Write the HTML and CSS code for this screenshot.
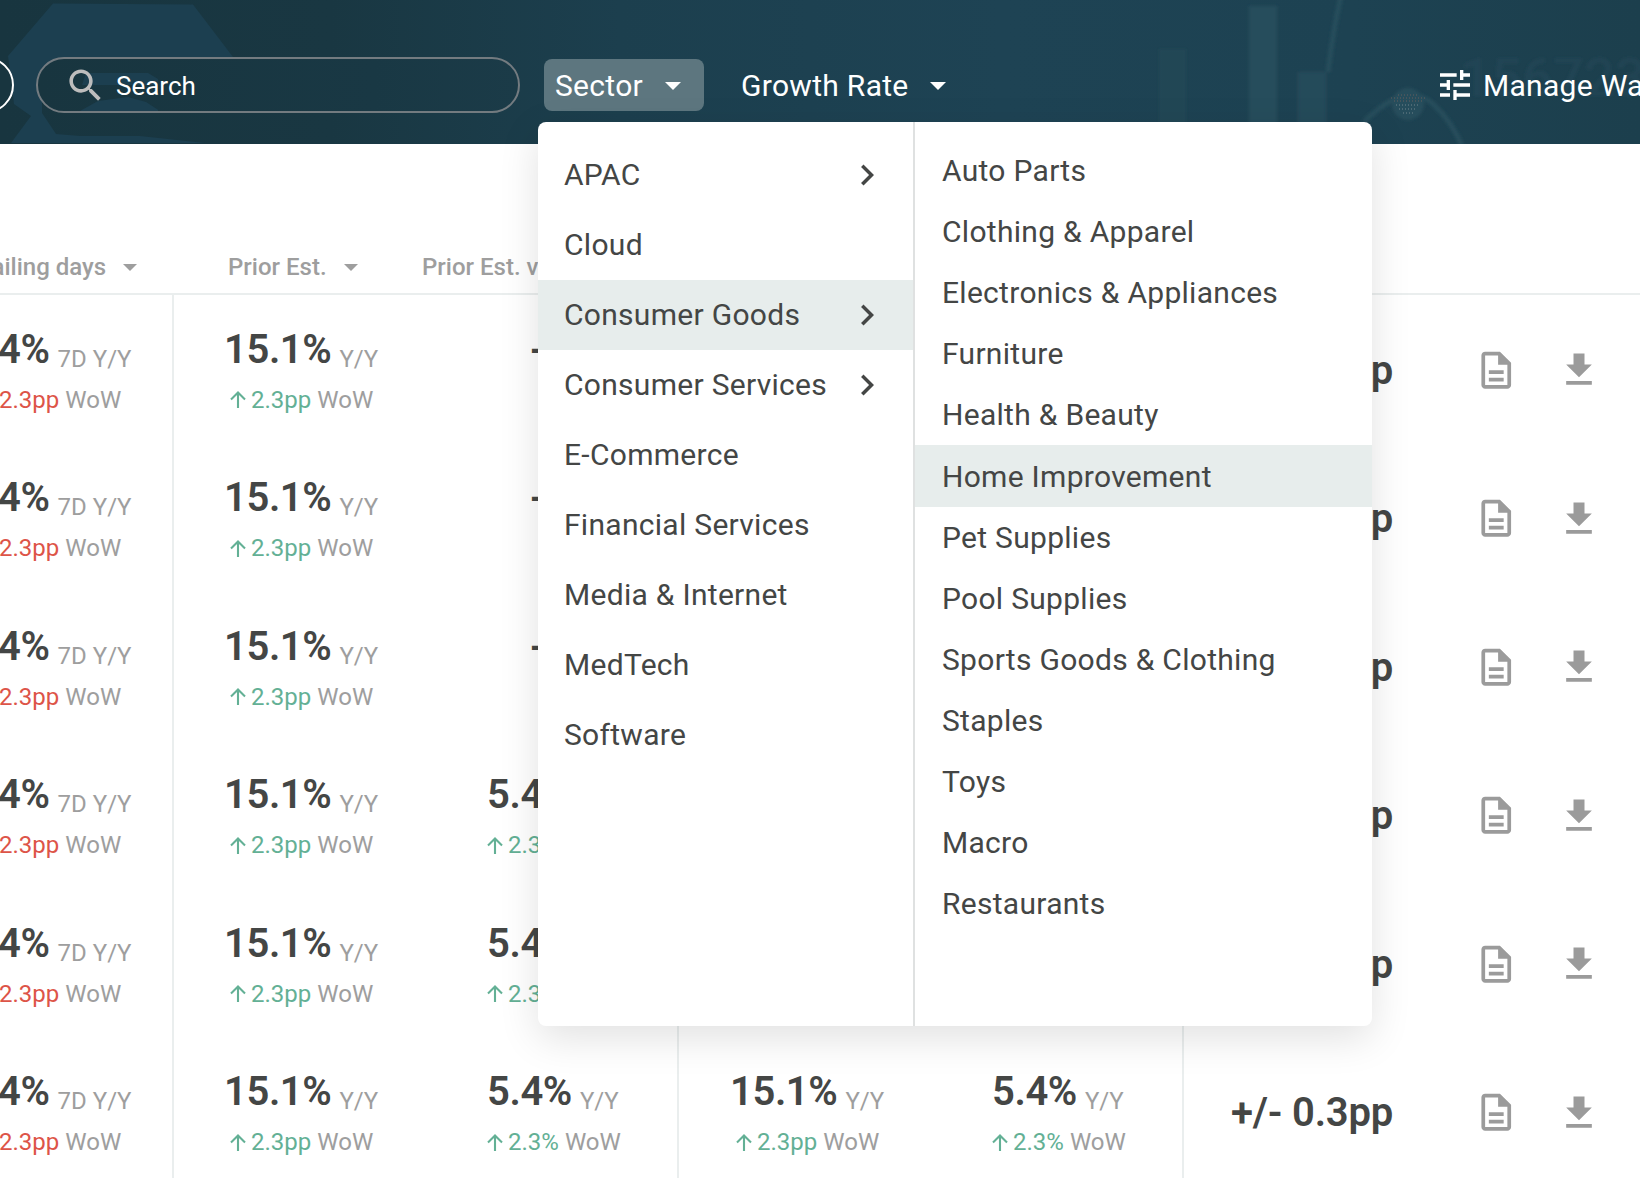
FILE: index.html
```html
<!DOCTYPE html>
<html lang="en">
<head>
<meta charset="utf-8">
<title>Watchlist</title>
<link rel="stylesheet" href="styles.css">
</head>
<body>

<svg class="defs" width="0" height="0">
  <symbol id="caret" viewBox="0 0 16 8"><path d="M0 0h16L8 8z"/></symbol>
  <symbol id="chevron" viewBox="0 0 24 24"><path d="M10 6L8.59 7.41 13.17 12l-4.58 4.59L10 18l6-6z"/></symbol>
  <symbol id="up" viewBox="0 0 16 17"><path d="M8 17V2M1 8.6l7-7 7 7" fill="none" stroke="currentColor" stroke-width="2.1"/></symbol>
  <symbol id="doc" viewBox="0 0 24 24"><path d="M8 16h8v2H8zm0-4h8v2H8zm6-10H6c-1.1 0-2 .9-2 2v16c0 1.1.89 2 1.99 2H18c1.1 0 2-.9 2-2V8l-6-6zm4 18H6V4h7v5h5v11z"/></symbol>
  <symbol id="download" viewBox="0 0 24 24"><path d="M19 9h-4V3H9v6H5l7 7 7-7zM5 18v2h14v-2H5z"/></symbol>
</svg>

<header class="header">
  <svg class="header-art" width="1640" height="144" viewBox="0 0 1640 144">
    <defs><filter id="soft"><feGaussianBlur stdDeviation="1.5"/></filter></defs>
    <path class="hex" d="M53 3.500L193 4.500 233 57V90H42L42 113 56 134 80 136H140L205 143H11L31 116 14 104 8 56z"/>
    <g class="chart" filter="url(#soft)">
      <path d="M1159 49h27v95h-27z" opacity=".35"/>
      <path d="M1249 6h28v138h-28z"/>
      <path d="M1298 72h28v72h-28z" opacity=".8"/>
      <path d="M1328 72Q1333 30 1341-4" class="line"/>
      <path d="M1364 122Q1408 78 1435 106 1452 122 1462 146" class="line"/>
      <circle cx="1408" cy="104" r="16"/>
      <text x="1460" y="96">15672390</text>
    </g>
    <g class="dots">
      <path d="M1394 101h28M1391 98h34M1398 95h21"/>
      <path d="M1396 105h24M1399 109h18M1403 113h10" class="pale"/>
    </g>
  </svg>
  <div class="toolbar">
    <div class="round"></div>
    <div class="search">
      <svg class="patch" width="120" height="52" viewBox="0 0 120 52"><path d="M48 14H110L120 20V26H44zM42 52L60 42 90 38 108 43 122 52z"/></svg>
      <svg width="43" height="43" viewBox="0 0 24 24"><path d="M15.500 14h-.79l-.28-.27C15.410 12.590 16 11.110 16 9.500 16 5.910 13.090 3 9.500 3S3 5.910 3 9.500 5.910 16 9.500 16c1.610 0 3.090-.59 4.230-1.570l.27.28v.79l5 4.990L20.490 19l-4.990-5zm-6 0C7.010 14 5 11.990 5 9.500S7.010 5 9.500 5 14 7.010 14 9.500 11.990 14 9.500 14z"/></svg>
      <span>Search</span>
    </div>
    <div class="filter active"><span>Sector</span><svg class="caret"><use href="#caret"/></svg></div>
    <div class="filter"><span>Growth Rate</span><svg class="caret"><use href="#caret"/></svg></div>
  </div>
  <div class="manage">
    <svg width="40" height="40" viewBox="0 0 24 24"><path d="M3 17v2h6v-2H3zM3 5v2h10V5H3zm10 16v-2h8v-2h-8v-2h-2v6h2zM7 9v2H3v2h4v2h2V9H7zm14 4v-2H11v2h10zm-6-4h2V7h4V5h-4V3h-2v6z"/></svg>
    <span>Manage Watchlist</span>
  </div>
</header>

<main class="table">
  <div class="thead">
    <div class="th first"><span>ailing days</span><svg class="caret"><use href="#caret"/></svg></div>
    <div class="th">Prior Est.<svg class="caret"><use href="#caret"/></svg></div>
    <div class="th vs">Prior Est. vs</div>
  </div>

  <div class="row">
    <div class="cell first"><p class="value"><b>4%</b> <i>7D Y/Y</i></p><p class="delta down">2.3pp <i>WoW</i></p></div>
    <div class="cell"><p class="value"><b>15.1%</b> <i>Y/Y</i></p><p class="delta indent"><svg class="up"><use href="#up"/></svg>2.3pp <i>WoW</i></p></div>
    <div class="cell second end"><p class="value none"><b>-</b></p></div>
    <div class="cell"></div>
    <div class="cell second end"></div>
    <div class="cell error">+/- 0.3pp</div>
    <div class="cell actions"><svg class="doc"><use href="#doc"/></svg><svg class="dl"><use href="#download"/></svg></div>
  </div>

  <div class="row">
    <div class="cell first"><p class="value"><b>4%</b> <i>7D Y/Y</i></p><p class="delta down">2.3pp <i>WoW</i></p></div>
    <div class="cell"><p class="value"><b>15.1%</b> <i>Y/Y</i></p><p class="delta indent"><svg class="up"><use href="#up"/></svg>2.3pp <i>WoW</i></p></div>
    <div class="cell second end"><p class="value none"><b>-</b></p></div>
    <div class="cell"></div>
    <div class="cell second end"></div>
    <div class="cell error">+/- 0.3pp</div>
    <div class="cell actions"><svg class="doc"><use href="#doc"/></svg><svg class="dl"><use href="#download"/></svg></div>
  </div>

  <div class="row">
    <div class="cell first"><p class="value"><b>4%</b> <i>7D Y/Y</i></p><p class="delta down">2.3pp <i>WoW</i></p></div>
    <div class="cell"><p class="value"><b>15.1%</b> <i>Y/Y</i></p><p class="delta indent"><svg class="up"><use href="#up"/></svg>2.3pp <i>WoW</i></p></div>
    <div class="cell second end"><p class="value none"><b>-</b></p></div>
    <div class="cell"></div>
    <div class="cell second end"></div>
    <div class="cell error">+/- 0.3pp</div>
    <div class="cell actions"><svg class="doc"><use href="#doc"/></svg><svg class="dl"><use href="#download"/></svg></div>
  </div>

  <div class="row">
    <div class="cell first"><p class="value"><b>4%</b> <i>7D Y/Y</i></p><p class="delta down">2.3pp <i>WoW</i></p></div>
    <div class="cell"><p class="value"><b>15.1%</b> <i>Y/Y</i></p><p class="delta indent"><svg class="up"><use href="#up"/></svg>2.3pp <i>WoW</i></p></div>
    <div class="cell second end"><p class="value"><b>5.4%</b></p><p class="delta"><svg class="up"><use href="#up"/></svg>2.3%</p></div>
    <div class="cell"></div>
    <div class="cell second end"></div>
    <div class="cell error">+/- 0.3pp</div>
    <div class="cell actions"><svg class="doc"><use href="#doc"/></svg><svg class="dl"><use href="#download"/></svg></div>
  </div>

  <div class="row">
    <div class="cell first"><p class="value"><b>4%</b> <i>7D Y/Y</i></p><p class="delta down">2.3pp <i>WoW</i></p></div>
    <div class="cell"><p class="value"><b>15.1%</b> <i>Y/Y</i></p><p class="delta indent"><svg class="up"><use href="#up"/></svg>2.3pp <i>WoW</i></p></div>
    <div class="cell second end"><p class="value"><b>5.4%</b></p><p class="delta"><svg class="up"><use href="#up"/></svg>2.3%</p></div>
    <div class="cell"></div>
    <div class="cell second end"></div>
    <div class="cell error">+/- 0.3pp</div>
    <div class="cell actions"><svg class="doc"><use href="#doc"/></svg><svg class="dl"><use href="#download"/></svg></div>
  </div>

  <div class="row">
    <div class="cell first"><p class="value"><b>4%</b> <i>7D Y/Y</i></p><p class="delta down">2.3pp <i>WoW</i></p></div>
    <div class="cell"><p class="value"><b>15.1%</b> <i>Y/Y</i></p><p class="delta indent"><svg class="up"><use href="#up"/></svg>2.3pp <i>WoW</i></p></div>
    <div class="cell second end"><p class="value"><b>5.4%</b> <i>Y/Y</i></p><p class="delta"><svg class="up"><use href="#up"/></svg>2.3% <i>WoW</i></p></div>
    <div class="cell"><p class="value"><b>15.1%</b> <i>Y/Y</i></p><p class="delta indent"><svg class="up"><use href="#up"/></svg>2.3pp <i>WoW</i></p></div>
    <div class="cell second end"><p class="value"><b>5.4%</b> <i>Y/Y</i></p><p class="delta"><svg class="up"><use href="#up"/></svg>2.3% <i>WoW</i></p></div>
    <div class="cell error">+/- 0.3pp</div>
    <div class="cell actions"><svg class="doc"><use href="#doc"/></svg><svg class="dl"><use href="#download"/></svg></div>
  </div>
</main>

<!-- sector dropdown -->
<div class="menu">
  <ul class="sectors">
    <li>APAC<svg><use href="#chevron"/></svg></li>
    <li>Cloud</li>
    <li class="selected">Consumer Goods<svg><use href="#chevron"/></svg></li>
    <li>Consumer Services<svg><use href="#chevron"/></svg></li>
    <li>E-Commerce</li>
    <li>Financial Services</li>
    <li>Media &amp; Internet</li>
    <li>MedTech</li>
    <li>Software</li>
  </ul>
  <ul class="industries">
    <li>Auto Parts</li>
    <li>Clothing &amp; Apparel</li>
    <li>Electronics &amp; Appliances</li>
    <li>Furniture</li>
    <li>Health &amp; Beauty</li>
    <li class="selected">Home Improvement</li>
    <li>Pet Supplies</li>
    <li>Pool Supplies</li>
    <li>Sports Goods &amp; Clothing</li>
    <li>Staples</li>
    <li>Toys</li>
    <li>Macro</li>
    <li>Restaurants</li>
  </ul>
</div>

</body>
</html>
```
FILE: styles.css
```css
* {
  box-sizing: border-box;
}

body {
  margin: 0;
  width: 1640px;
  height: 1178px;
  overflow: hidden;
  position: relative;
  background: #fff;
  color: #444645;
  font-family: Roboto, sans-serif;
}

p, ul {
  margin: 0;
  padding: 0;
}

i {
  font-style: normal;
}

svg {
  display: block;
  flex: none;
  fill: currentColor;
}

.defs {
  position: absolute;
}

/* header */
.header {
  position: relative;
  height: 144px;
  padding-top: 57px;
  display: flex;
  overflow: hidden;
  color: #fff;
  font-size: 30px;
  letter-spacing: 0.3px;
  white-space: nowrap;
  background: linear-gradient(90deg, #18353f 0, #193742 330px, #1c3f4e 620px, #1e4354 1000px, #1d4252 1350px, #1c3f4d 1640px);
}

.header-art {
  position: absolute;
  left: 0;
  top: 0;
}

.hex {
  fill: #1c3f50;
}

.chart {
  fill: #264d5c;
}

.chart .line {
  fill: none;
  stroke: #264d5c;
  stroke-width: 5;
}

.chart text {
  font-size: 54px;
  font-weight: 500;
  opacity: 0.4;
}

.dots path {
  stroke: #665f5c;
  stroke-width: 1;
  stroke-dasharray: 1 2;
}

.dots .pale {
  stroke: #71858c;
}

.toolbar {
  position: relative;
  flex: 0 0 1435px;
  height: 56px;
  display: flex;
  align-items: center;
}

.round {
  width: 56px;
  height: 56px;
  margin: 0 22px 0 -42px;
  border: 2px solid #fff;
  border-radius: 50%;
  background: #18353f;
}

.search {
  position: relative;
  width: 484px;
  height: 56px;
  margin-right: 24px;
  padding-left: 26px;
  display: flex;
  align-items: center;
  border: 2px solid #737b80;
  border-radius: 28px;
  background: linear-gradient(90deg, #18353f, #193844 70%, #1b3b48);
  font-size: 26px;
  letter-spacing: 0;
}

.search svg {
  color: #bdbdbd;
  margin-right: 9px;
}

.search .patch {
  position: absolute;
  left: 0;
  top: 0;
  color: #1c3f50;
}

.search svg + svg,
.search span {
  position: relative;
}

.search span {
  padding-top: 2px;
}

.filter {
  height: 52px;
  padding: 0 21px 0 11px;
  margin-right: 26px;
  display: flex;
  align-items: center;
  border-radius: 8px;
}

.filter.active {
  width: 160px;
  background: #5d767f;
}

.caret {
  width: 16px;
  height: 8px;
}

.filter .caret {
  margin: 1px 0 0 21px;
}

.filter.active .caret {
  margin-left: 22px;
}

.manage {
  position: relative;
  height: 56px;
  display: flex;
  align-items: center;
  gap: 8px;
}

/* table */
.thead {
  height: 150.5px;
  padding-bottom: 12px;
  display: flex;
  align-items: flex-end;
  border-bottom: 2px solid #eaeeee;
  color: #9e9e9e;
  font-size: 24px;
  font-weight: 500;
  line-height: 28px;
}

.th {
  width: 194px;
  display: flex;
  align-items: center;
  white-space: nowrap;
}

.th.first {
  width: 228px;
}

.th.first span {
  margin-left: -8.5px;
}

.th .caret {
  width: 14px;
  height: 7px;
  margin: 1px 0 0 17px;
}

.row {
  height: 148.5px;
  display: grid;
  grid-template-columns: 174px 262px 243px 262px 243px 270px 186px;
}

.cell {
  padding: 31px 0 0 51px;
  white-space: nowrap;
}

.cell:nth-child(4n + 2) {
  padding-left: 50px;
}

.cell.first {
  padding-left: 0;
  border-right: 2px solid #eaeeee;
}

.cell.end {
  border-right: 2px solid #eaeeee;
}

.value {
  height: 54px;
  line-height: 48px;
}

.value b {
  font-size: 40px;
  font-weight: 600;
  letter-spacing: -0.4px;
  margin-right: 4px;
}

.first .value b {
  margin-left: -2px;
}

.value i, .delta i {
  color: #9e9e9e;
  font-weight: 400;
}

.value i {
  position: relative;
  top: 4px;
  font-size: 24px;
}

.delta {
  display: flex;
  align-items: center;
  height: 40px;
  color: #63b095;
  font-size: 24px;
}

.delta i {
  margin-left: 6px;
}

.delta.indent {
  padding-left: 6px;
}

.delta.down {
  color: #dd5448;
  margin-left: -1px;
}

.up {
  width: 16px;
  height: 17px;
  margin-right: 5px;
}

.value.none {
  padding-left: 43px;
}

.cell.error {
  padding: 0 0 0 47px;
  font-size: 40px;
  font-weight: 600;
  letter-spacing: -0.2px;
  line-height: 151px;
}

.cell.actions {
  padding: 0 0 0 20px;
  display: flex;
  align-items: center;
  color: #9b9b9b;
}

.doc {
  width: 44.5px;
  height: 44.5px;
}

.dl {
  width: 44px;
  height: 44px;
  margin-left: 38px;
}

/* dropdown */
.menu {
  position: absolute;
  left: 538px;
  top: 122px;
  width: 834px;
  height: 904px;
  display: flex;
  border-radius: 8px;
  background: #fff;
  box-shadow: 0 12px 40px rgba(0, 0, 0, 0.12);
  font-size: 30px;
  letter-spacing: 0.29px;
}

.menu ul {
  padding-top: 18px;
  list-style: none;
}

.menu li {
  display: flex;
  align-items: center;
  justify-content: space-between;
}

.menu .selected {
  background: #e7edec;
}

.sectors {
  width: 377px;
  border-right: 2px solid #dfe1e1;
}

.sectors li {
  height: 69.9px;
  padding: 0 25px 0 26px;
}

.sectors svg {
  width: 42px;
  height: 42px;
}

.industries {
  flex: 1;
}

.industries li {
  height: 61.1px;
  padding-left: 27px;
}
```
